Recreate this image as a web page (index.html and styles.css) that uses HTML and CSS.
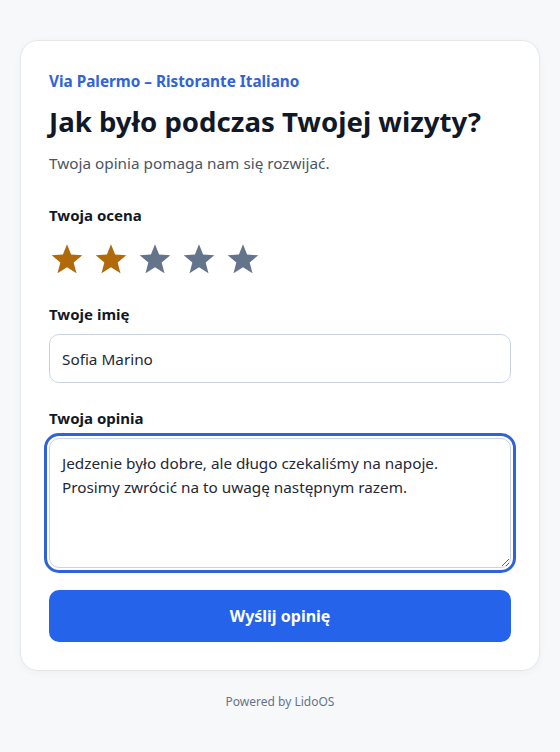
FILE: index.html
```html
<!DOCTYPE html>
<html lang="pl">
<head>
    <meta charset="UTF-8">
    <meta name="viewport" content="width=device-width, initial-scale=1.0">
    <title>Opinia – Via Palermo</title>
    <link rel="stylesheet" href="styles.css">
</head>
<body>
    <main class="card">
        <p class="venue">Via Palermo – Ristorante Italiano</p>
        <h1>Jak było podczas Twojej wizyty?</h1>
        <p class="lead">Twoja opinia pomaga nam się rozwijać.</p>

        <div class="field field-rating">
            <span class="label">Twoja ocena</span>
            <div class="stars">
                <button class="star on" aria-label="1"><svg viewBox="0 0 24 24"><polygon points="12,1.5 14.9,8.9 22.8,9.4 16.7,14.4 18.7,22.1 12,17.8 5.3,22.1 7.3,14.4 1.2,9.4 9.1,8.9"/></svg></button>
                <button class="star on" aria-label="2"><svg viewBox="0 0 24 24"><polygon points="12,1.5 14.9,8.9 22.8,9.4 16.7,14.4 18.7,22.1 12,17.8 5.3,22.1 7.3,14.4 1.2,9.4 9.1,8.9"/></svg></button>
                <button class="star" aria-label="3"><svg viewBox="0 0 24 24"><polygon points="12,1.5 14.9,8.9 22.8,9.4 16.7,14.4 18.7,22.1 12,17.8 5.3,22.1 7.3,14.4 1.2,9.4 9.1,8.9"/></svg></button>
                <button class="star" aria-label="4"><svg viewBox="0 0 24 24"><polygon points="12,1.5 14.9,8.9 22.8,9.4 16.7,14.4 18.7,22.1 12,17.8 5.3,22.1 7.3,14.4 1.2,9.4 9.1,8.9"/></svg></button>
                <button class="star" aria-label="5"><svg viewBox="0 0 24 24"><polygon points="12,1.5 14.9,8.9 22.8,9.4 16.7,14.4 18.7,22.1 12,17.8 5.3,22.1 7.3,14.4 1.2,9.4 9.1,8.9"/></svg></button>
            </div>
        </div>

        <div class="field">
            <label class="label" for="name">Twoje imię</label>
            <input type="text" id="name" value="Sofia Marino">
        </div>

        <div class="field">
            <label class="label" for="review">Twoja opinia</label>
            <textarea id="review" class="focused">Jedzenie było dobre, ale długo czekaliśmy na napoje.
Prosimy zwrócić na to uwagę następnym razem.</textarea>
        </div>

        <button class="submit">Wyślij opinię</button>
    </main>
    <footer class="powered">Powered by LidoOS</footer>
</body>
</html>
```

FILE: styles.css
```css
html, body {
    margin: 0;
    padding: 0;
}

body {
    background-color: #f7f8fa;
    font-family: "Noto Sans", "Open Sans", sans-serif;
    color: #0f172a;
    padding: 40px 20px 0;
}

.card {
    background-color: #fff;
    border: 1px solid #e5e7eb;
    border-radius: 18px;
    box-shadow: 0 2px 8px rgba(15, 23, 42, 0.04);
    padding: 28px;
}

.venue {
    margin: 0;
    color: #2f63d8;
    font-size: 15.3px;
    font-weight: 700;
    line-height: 24px;
}

h1 {
    margin: 10px 0 0;
    font-size: 27.6px;
    line-height: 36px;
    font-weight: 700;
    color: #111827;
}

.lead {
    margin: 12px 0 0;
    color: #4b5563;
    font-size: 15.3px;
    line-height: 24px;
}

.field {
    margin-top: 25px;
}

.field-rating {
    margin-top: 30px;
}

.label {
    display: block;
    font-size: 15px;
    font-weight: 700;
    line-height: 20px;
    color: #111827;
    margin-bottom: 10px;
}

.stars {
    display: flex;
    gap: 8px;
    padding: 6px 0 2px;
}

.star {
    width: 36px;
    height: 36px;
    padding: 0;
    border: none;
    background: none;
    display: flex;
    align-items: center;
    justify-content: center;
    fill: #64748b;
    cursor: pointer;
}

.star svg {
    width: 34px;
    height: 34px;
    flex: none;
}

.star.on {
    fill: #b06a0a;
}

input[type="text"],
textarea {
    display: block;
    width: 100%;
    box-sizing: border-box;
    font-family: inherit;
    font-size: 15.3px;
    line-height: 24px;
    color: #1f2937;
    border: 1px solid #cbd5e1;
    border-radius: 10px;
    padding: 12px;
    background-color: #fff;
}

input[type="text"] {
    height: 49px;
}

textarea {
    height: 130px;
    resize: vertical;
}

textarea.focused {
    outline: 3px solid #2f63d8;
    outline-offset: 2px;
}

.submit {
    display: block;
    width: 100%;
    height: 52px;
    margin-top: 22px;
    border: none;
    border-radius: 10px;
    background-color: #2563eb;
    color: #fff;
    font-family: inherit;
    font-size: 16px;
    font-weight: 700;
    cursor: pointer;
}

.powered {
    text-align: center;
    font-size: 12px;
    line-height: 16px;
    color: #64748b;
    margin-top: 23px;
}
```
